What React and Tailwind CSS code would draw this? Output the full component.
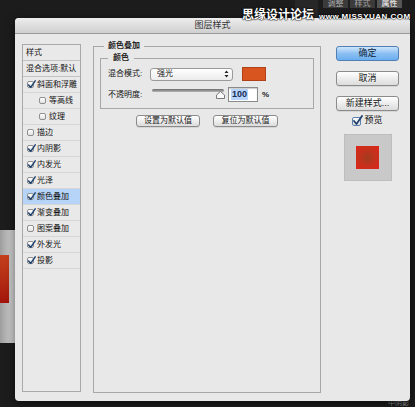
import React from 'react';

const font = "font-['Liberation_Sans','Noto_Sans_CJK_SC',sans-serif]";

const layers = [
  { label: '样式', head: true },
  { label: '混合选项:默认', head: true },
  { label: '斜面和浮雕', checked: true },
  { label: '等高线', checked: false, indent: true },
  { label: '纹理', checked: false, indent: true },
  { label: '描边', checked: false },
  { label: '内阴影', checked: true },
  { label: '内发光', checked: true },
  { label: '光泽', checked: true },
  { label: '颜色叠加', checked: true, active: true },
  { label: '渐变叠加', checked: true },
  { label: '图案叠加', checked: false },
  { label: '外发光', checked: true },
  { label: '投影', checked: true },
];

function CheckBox({ checked, big }) {
  return (
    <span
      className={`relative inline-block shrink-0 rounded-[2px] border bg-gradient-to-b from-white to-[#e2e2e2] ${
        big ? 'w-[9px] h-[9px] border-[#5d7fae]' : 'w-[7px] h-[7px] border-[#8f8f8f]'
      }`}
    >
      {checked && (
        <svg
          className={big ? 'absolute -left-[1px] -top-[3px]' : 'absolute -left-[1px] -top-[2px]'}
          width={big ? 11 : 9}
          height={big ? 11 : 9}
          viewBox="0 0 11 11"
        >
          <path d="M2 6 L4.5 9 L10 1" fill="none" stroke="#1f416f" strokeWidth="1.8" strokeLinecap="round" strokeLinejoin="round" />
        </svg>
      )}
    </span>
  );
}

function Button({ children, className = '' }) {
  return (
    <div className={`flex items-center justify-center rounded-[3px] border border-[#8b8b8b] bg-gradient-to-b from-white to-[#dcdcdc] text-[#1a1a1a] shadow-[0_1px_0_rgba(0,0,0,0.08)] ${className}`}>
      {children}
    </div>
  );
}

export default function App() {
  return (
    <div className={`relative w-[415px] h-[407px] overflow-hidden bg-[#1c1c1c] ${font}`}>
      {/* app behind the dialog */}
      <div className="absolute left-[295px] top-0 w-[23px] h-[18px] bg-[#272727]" />
      <div className="absolute right-[13px] top-0 flex gap-[2px]">
        {['调整', '样式', '属性'].map((t, i) => (
          <div
            key={t}
            className={`w-[25px] h-[8px] overflow-hidden flex items-end justify-center text-[8px] leading-[8px] ${
              i === 2 ? 'bg-[#555] text-white' : 'bg-[#3b3b3b] text-[#a8a8a8]'
            }`}
          >
            {t}
          </div>
        ))}
      </div>
      <div className="absolute left-0 top-[230px] w-[15px] h-[113px] bg-gradient-to-r from-[#9c9c9c] to-[#dadada]">
        <div className="mt-[25px] w-[9px] h-[48px] bg-gradient-to-b from-[#c4401c] to-[#a3140c]" />
      </div>
      <div className="absolute right-[6px] bottom-0 text-[7px] leading-[8px] text-[#8a8a8a]">中阴影</div>

      {/* dialog window */}
      <div className="absolute left-[15px] top-[18px] w-[395px] h-[383px] rounded-[4px] bg-[#e8e8e8] shadow-[0_2px_8px_rgba(0,0,0,0.6)] flex flex-col">
        <div className="h-[16px] shrink-0 rounded-t-[4px] border-b border-[#9a9a9a] bg-gradient-to-b from-[#ededed] to-[#cfcfcf] flex items-center justify-center text-[9px] text-[#333]">
          图层样式
        </div>

        <div className="flex items-start pl-[7px]">
          {/* style list */}
          <div className="mt-[10px] w-[59px] h-[348px] border border-[#a9a9a9] bg-[#e9e9e9] text-[8px] text-[#111]">
            {layers.map((l) => (
              <div
                key={l.label}
                className={`h-[16px] flex items-center gap-[3px] border-b ${
                  l.head ? 'pl-[3px] border-[#c2c2c2]' : l.indent ? 'pl-[16px] border-[#d6d6d6]' : 'pl-[4px] border-[#d6d6d6]'
                } ${l.active ? 'bg-[#b6d4f8]' : ''}`}
              >
                {!l.head && <CheckBox checked={l.checked} />}
                <span className="whitespace-nowrap">{l.label}</span>
              </div>
            ))}
          </div>

          {/* colour overlay group */}
          <fieldset className="ml-[12px] mt-[6px] w-[228px] h-[353px] border border-[#a7a7a7] px-[6px]">
            <legend className="ml-[4px] px-[4px] text-[8px] leading-[12px] font-bold text-[#222]">颜色叠加</legend>

            <fieldset className="border border-[#a7a7a7] px-[7px] pb-[6px]">
              <legend className="px-[5px] text-[8px] leading-[12px] font-bold text-[#222]">颜色</legend>

              <div className="mt-[3px] flex items-center h-[14px]">
                <span className="w-[42px] text-[8px] text-[#111] whitespace-nowrap">混合模式:</span>
                <div className="w-[83px] h-[13px] rounded-[3px] border border-[#9a9a9a] bg-gradient-to-b from-white to-[#ececec] flex items-center justify-between pl-[6px] pr-[3px] text-[8px] text-[#111]">
                  <span>强光</span>
                  <svg width="5" height="8" viewBox="0 0 5 8">
                    <path d="M0.5 3 L2.5 0.5 L4.5 3 Z M0.5 5 L2.5 7.5 L4.5 5 Z" fill="#222" />
                  </svg>
                </div>
                <div className="ml-[9px] w-[24px] h-[14px] border border-[#b04018] bg-[#d9551f]" />
              </div>

              <div className="mt-[6px] flex items-center h-[15px]">
                <span className="w-[43px] text-[8px] text-[#111] whitespace-nowrap">不透明度:</span>
                <div className="relative w-[74px] h-[15px]">
                  <div className="absolute left-[1px] top-[2px] w-[72px] h-[3px] rounded-full bg-gradient-to-b from-[#6e6e6e] to-[#b5b5b5]" />
                  <svg className="absolute left-[65px] top-[4px]" width="9" height="8" viewBox="0 0 9 8">
                    <path d="M4.5 0.5 L8.5 4 L8.5 7.5 L0.5 7.5 L0.5 4 Z" fill="#fafafa" stroke="#7a7a7a" strokeWidth="1" />
                  </svg>
                </div>
                <div className="ml-[3px] w-[30px] h-[15px] border border-[#8a8a8a] bg-white shadow-[inset_0_1px_1px_rgba(0,0,0,0.2)] flex items-center pl-[2px]">
                  <span className="bg-[#b5d5fd] px-[1px] text-[9px] leading-[11px] font-bold text-[#1b2c52]">100</span>
                </div>
                <span className="ml-[4px] text-[8px] font-bold text-[#222]">%</span>
              </div>
            </fieldset>

            <div className="mt-[6px] flex justify-center gap-[13px]">
              <Button className="w-[64px] h-[12px] text-[8px]">设置为默认值</Button>
              <Button className="w-[65px] h-[12px] text-[8px]">复位为默认值</Button>
            </div>
          </fieldset>

          {/* right column */}
          <div className="ml-[15px] mt-[12px] w-[63px] flex flex-col">
            <div className="h-[15px] rounded-[3px] border border-[#4f7fb4] bg-gradient-to-b from-[#cfe5fb] via-[#8cc0f2] to-[#6aaef0] flex items-center justify-center text-[9px] text-[#0d1f3a]">
              确定
            </div>
            <Button className="mt-[10px] h-[15px] text-[9px]">取消</Button>
            <Button className="mt-[10px] h-[15px] text-[9px]">新建样式...</Button>
            <div className="mt-[4px] h-[12px] flex items-center justify-center gap-[3px] text-[9px] text-[#111]">
              <CheckBox checked big />
              <span>预览</span>
            </div>
            <div className="mt-[7px] mx-auto w-[48px] h-[47px] border border-[#bdbdbd] bg-[#c9c9c9] flex items-center justify-center">
              <div className="w-[23px] h-[23px] bg-[radial-gradient(circle,#a23c1e_0%,#c8301c_55%,#e0241a_100%)]" />
            </div>
          </div>
        </div>
      </div>

      {/* watermark */}
      <div className="absolute left-[242px] top-[8px] flex items-end gap-[5px] text-white [text-shadow:0_0_1px_#000,0_0_1px_#000,0_0_2px_#000]">
        <span className="text-[12px] leading-[14px] font-bold">思缘设计论坛</span>
        <span className="text-[8px] leading-[10px] font-bold tracking-[0.5px]">www.MISSYUAN.COM</span>
      </div>
    </div>
  );
}
